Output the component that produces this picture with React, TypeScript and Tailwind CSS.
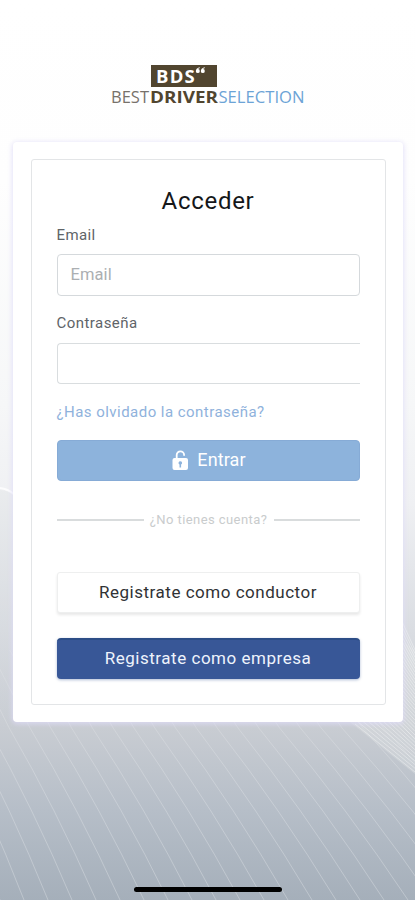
const rays = Array.from({ length: 26 }, (_, i) => i - 7);
const fine = Array.from({ length: 34 }, (_, i) => i);

function Backdrop() {
  return (
    <svg className="absolute inset-0 h-full w-full" viewBox="0 0 415 900" fill="none">
      <defs>
        <linearGradient id="sky" x1="0" y1="0" x2="0" y2="1">
          <stop offset="0" stopColor="#ffffff" />
          <stop offset="0.2" stopColor="#fefefe" />
          <stop offset="0.45" stopColor="#f6f7f8" />
          <stop offset="0.56" stopColor="#eff0f3" />
          <stop offset="0.7" stopColor="#dadde2" />
          <stop offset="0.81" stopColor="#c8ccd2" />
          <stop offset="0.9" stopColor="#b6bec8" />
          <stop offset="1" stopColor="#a5afba" />
        </linearGradient>
        <linearGradient id="hill" x1="0" y1="488" x2="0" y2="720" gradientUnits="userSpaceOnUse">
          <stop offset="0" stopColor="#eaecee" />
          <stop offset="1" stopColor="#c8cdd4" stopOpacity="0.2" />
        </linearGradient>
        <linearGradient id="ray" x1="0" y1="650" x2="0" y2="900" gradientUnits="userSpaceOnUse">
          <stop offset="0" stopColor="#fff" stopOpacity="0.1" />
          <stop offset="0.5" stopColor="#fff" stopOpacity="0.22" />
          <stop offset="1" stopColor="#fff" stopOpacity="0.27" />
        </linearGradient>
      </defs>
      <rect width="415" height="900" fill="url(#sky)" />
      <path d="M0 490Q8 490 14 496V720H0Z" fill="url(#hill)" />
      <path d="M0 488Q8 489 14 494" stroke="#fff" strokeWidth="2" strokeOpacity="0.8" />
      {rays.map((k) => {
        const top = 30 + 20.8 * k;
        const end = 120 + 24 * k;
        return (
          <path
            key={k}
            d={`M${top - 40 - k} 650L${top} 728Q${(top + end) / 2 + 3} 808 ${end} 900`}
            stroke="url(#ray)"
          />
        );
      })}
      <path d="M345 718L415 774V650L403 642V718Z" fill="#e5e8e9" fillOpacity="0.3" />
      {fine.map((k) => (
        <path
          key={k}
          d={`M${355 + k * 1.2} ${724 - k * 3.6}L415 ${772 - k * 3.7}`}
          stroke="#fff"
          strokeOpacity="0.4"
          strokeWidth="0.9"
        />
      ))}
    </svg>
  );
}

function Logo() {
  return (
    <div className="flex h-[142px] flex-col pt-[65px] pl-[111px]">
      <svg
        className="h-[42px] w-[196px]"
        viewBox="0 0 196 42"
        fontFamily="Open Sans, sans-serif"
        fontSize="15.5"
      >
        <rect x="40" y="0" width="66" height="22" fill="#51452f" />
        <text x="45" y="17.6" fill="#fff" fontSize="18" fontWeight="700" textLength="40" lengthAdjust="spacingAndGlyphs" letterSpacing="1.2">BDS</text>
        <g fill="#fff">
          <path d="M88.5 2.2Q84.8 3.4 84.8 6.2a2 2 0 1 0 2.200-2.100Q87.500 3.300 89 3Z" />
          <path d="M93.500 2.200Q89.800 3.400 89.800 6.200a2 2 0 1 0 2.200-2.100Q92.500 3.300 94 3Z" />
        </g>
        <text x="0" y="37.500" fill="#77716a" textLength="38" lengthAdjust="spacingAndGlyphs">BEST</text>
        <text x="39" y="37.500" fill="#51452f" fontWeight="700" textLength="68" lengthAdjust="spacingAndGlyphs">DRIVER</text>
        <text x="107.500" y="37.500" fill="#6ca3d6" textLength="86" lengthAdjust="spacingAndGlyphs">SELECTION</text>
      </svg>
    </div>
  );
}

function UnlockIcon() {
  return (
    <svg className="mt-[2px] mr-[8px] h-[21px] w-[17px]" viewBox="0 0 17 21" fill="none">
      <path d="M4.7 9V5a3.7 3.7 0 0 1 7.400 0v.8" stroke="#fff" strokeWidth="1.800" />
      <path
        fillRule="evenodd"
        d="M2.500 8H14a2 2 0 0 1 2 2v8a2 2 0 0 1-2 2H2.500a2 2 0 0 1-2-2v-8a2 2 0 0 1 2-2Zm5.800 3.200a1.800 1.800 0 0 0-.8 3.400v2.800h1.600v-2.800a1.800 1.800 0 0 0-.8-3.400Z"
        fill="#fff"
      />
    </svg>
  );
}

export default function App() {
  return (
    <div className="relative h-[900px] w-[415px] overflow-hidden font-[Roboto,sans-serif]">
      <Backdrop />
      <div className="relative flex h-full flex-col">
        <Logo />
        <main className="ml-[13px] h-[580px] w-[390px] shrink-0 rounded-[4px] bg-white px-[17.5px] pt-[17px] shadow-[0_1px_5px_1px_#dedbf7cc]">
          <form className="flex h-[546px] flex-col rounded-[3px] border border-[#e3e5e7] px-[25px] pt-[25px]">
            <h1 className="h-[32px] text-center text-[24px] leading-[32px] tracking-[0.7px] text-[#15171a]">Acceder</h1>
            <label className="mt-[8px] h-[20px] text-[15px] leading-[20px] tracking-[0.4px] text-[#606468]">Email</label>
            <input
              className="mt-[9px] h-[42px] w-full rounded-[4px] border border-[#d5d9dc] bg-white px-[13px] pb-[1px] text-[16.5px] tracking-[0.1px] placeholder:text-[#abafb2]"
              placeholder="Email"
            />
            <label className="mt-[17px] h-[20px] text-[15px] leading-[20px] tracking-[0.45px] text-[#606468]">Contraseña</label>
            <input
              type="password"
              className="mt-[10px] h-[41px] w-full rounded-l-[4px] border border-r-0 border-[#d9dddf] bg-white"
            />
            <a className="mt-[17px] h-[22px] text-[15px] leading-[22px] tracking-[0.46px] whitespace-nowrap text-[#8fb2dc]">
              ¿Has olvidado la contraseña?
            </a>
            <button
              type="button"
              className="mt-[17px] flex h-[41px] items-center justify-center rounded-[4px] border border-[#86abd6] bg-[#8db3dc] pb-[2px] pl-[2px] text-[18px] tracking-[0.1px] text-white"
            >
              <UnlockIcon />
              Entrar
            </button>
            <div className="mt-[29px] flex h-[20px] items-center">
              <span className="h-[1.5px] w-[87px] bg-[#d9dcdd]" />
              <span className="flex-1 text-center text-[13px] leading-[20px] tracking-[0.43px] whitespace-nowrap text-[#c9cccd]">
                ¿No tienes cuenta?
              </span>
              <span className="h-[1.5px] w-[86px] bg-[#d9dcdd]" />
            </div>
            <button
              type="button"
              className="mt-[42px] h-[41px] rounded-[3px] border border-[#eeefef] bg-white text-[17px] tracking-[0.52px] text-[#303235] shadow-[0_2px_3px_#00000018]"
            >
              Registrate como conductor
            </button>
            <button
              type="button"
              className="mt-[25px] h-[41px] rounded-[4px] border-t-2 border-[#2c4d86] bg-[#385797] pb-[2px] text-[17px] tracking-[0.53px] text-[#eef3fc] shadow-[0_1px_3px_#38579766]"
            >
              Registrate como empresa
            </button>
          </form>
        </main>
        <div className="mx-auto mt-auto mb-[8px] h-[5px] w-[148px] rounded-full bg-black" />
      </div>
    </div>
  );
}
